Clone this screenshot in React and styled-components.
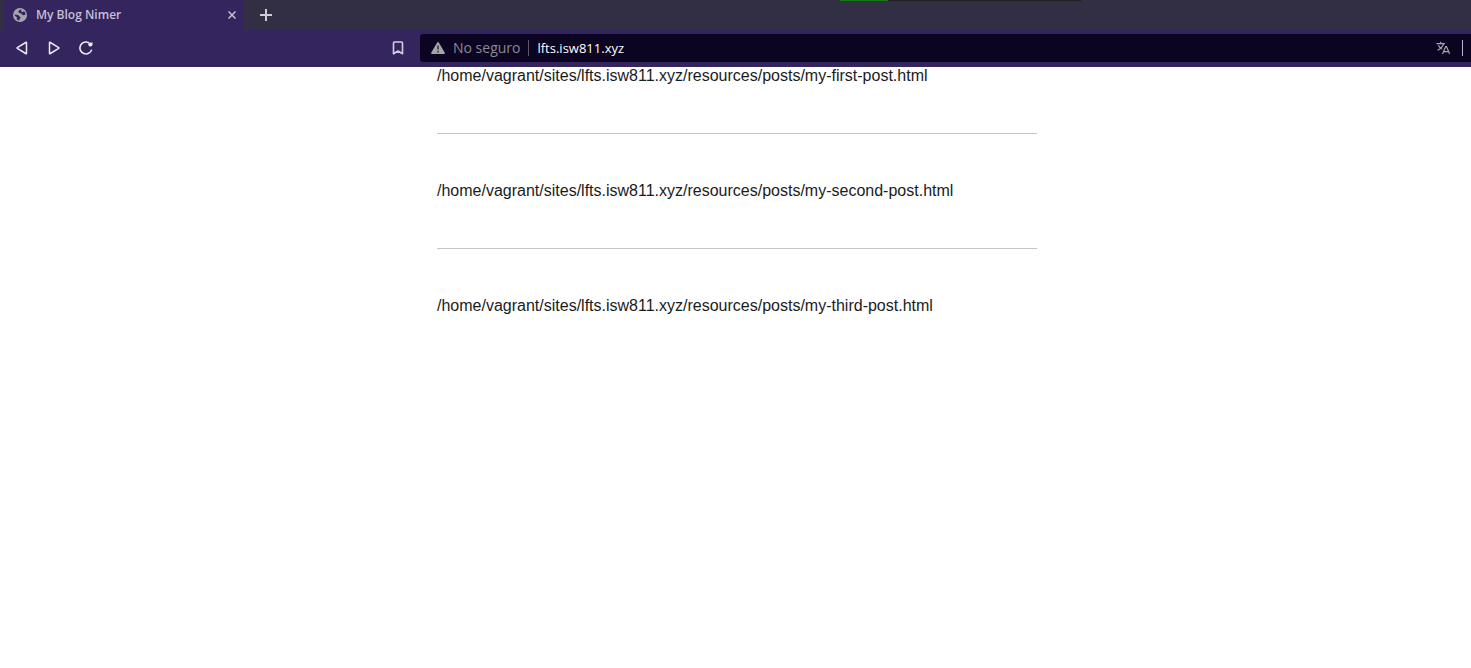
import React from "react";
import styled, { createGlobalStyle } from "styled-components";

const GlobalStyle = createGlobalStyle`
  * { box-sizing: border-box; }
  body {
    margin: 0;
    background: #ffffff;
    color: #1b1b1b;
    font-family: "Liberation Sans", Arial, sans-serif;
    font-size: 16px;
  }
  button, input { font-family: "Open Sans", "Noto Sans", sans-serif; }
`;

const Chrome = styled.header`
  position: relative;
  font-family: "Open Sans", "Noto Sans", sans-serif;
`;

const Progress = styled.div`
  position: absolute;
  top: 0;
  left: 840px;
  width: 241px;
  height: 1px;
  background: linear-gradient(to right, #107c10 20%, #1f1f1f 20%);
`;

const TabStrip = styled.div`
  display: flex;
  height: 30px;
  padding-left: 4px;
  background: #322e44;
`;

const Tab = styled.div`
  display: flex;
  align-items: center;
  width: 240px;
  padding: 0 4px 0 8px;
  background: #34255f;
  border-radius: 4px 0 0 0;
`;

const TabTitle = styled.span`
  flex: 1;
  margin-left: 8px;
  color: #c5bfd3;
  font-size: 12px;
  font-weight: 600;
  line-height: 16px;
  white-space: nowrap;
`;

const IconButton = styled.button`
  display: flex;
  align-items: center;
  justify-content: center;
  flex: none;
  width: ${({ $width }) => $width || 32}px;
  height: 28px;
  padding: 0;
  border: 0;
  background: none;
  color: ${({ $color }) => $color || "#ece9f3"};
`;

const NewTab = styled(IconButton)`
  align-self: center;
  margin-left: 6px;
`;

const Toolbar = styled.div`
  display: flex;
  align-items: center;
  height: 37px;
  padding: 4px 0 5px;
  background: #34255f;
`;

const Navigation = styled.nav`
  display: flex;
  flex: none;
  width: 420px;
  padding: 0 6px;
`;

const BookmarkButton = styled(IconButton)`
  margin-left: auto;
`;

const AddressBar = styled.div`
  display: flex;
  align-items: center;
  flex: 1;
  min-width: 0;
  height: 28px;
  padding: 0 8px 0 11px;
  background: #0b0521;
  border-radius: 3px 0 0 3px;
`;

const Security = styled.button`
  display: flex;
  align-items: center;
  flex: none;
  gap: 8px;
  padding: 0;
  border: 0;
  background: none;
  color: #8b8993;
  font-size: 14px;
  line-height: 20px;
`;

const Divider = styled.span`
  flex: none;
  width: 1px;
  height: 16px;
  margin: 0 ${({ $space }) => $space}px;
  background: ${({ $color }) => $color};
`;

const Url = styled.input`
  flex: 1;
  min-width: 0;
  padding: 0;
  border: 0;
  outline: 0;
  background: none;
  color: #ffffff;
  font-size: 13px;
  font-weight: 500;
  line-height: 20px;
`;

const Page = styled.main`
  padding-left: 3px;
`;

const Posts = styled.div`
  max-width: 600px;
  margin: 0 auto;
`;

const Post = styled.article`
  line-height: 18px;

  & + & {
    margin-top: 48px;
    padding-top: 48px;
    border-top: 1px solid #c5c5c5;
  }
`;

const GlobeIcon = () => (
  <svg width="16" height="16" viewBox="0 0 16 16" aria-hidden="true">
    <circle cx="8" cy="8" r="7" fill="#a5a4ac" />
    <path
      d="M9.4 2.6C7.6 3 6.2 3.6 6.4 5c.2 1.2 1.6 1.2 2.6 1.6 1 .4 1 1.5 2.2 1.7.9.1 1.6-.3 2.4-.7a5.6 5.6 0 0 0-1.6-3.5c-.6.8-1.2 1.2-2 1-.8-.2-.8-1.2-.6-2.5Z"
      fill="#34255f"
    />
    <path
      d="M2.4 7.6c1.4.4 2.8.1 3.9.6 1 .4.9 1.2 1.7 1.5.9.4.7 1.3.1 1.7-.7.5-.9 1.2-1 2.1a5.6 5.6 0 0 1-2.6-1.6c.8-.4.9-1 .3-1.6-.8-.7-1.9-1.2-2.4-2.7Z"
      fill="#34255f"
    />
  </svg>
);

const CloseIcon = () => (
  <svg width="8" height="8" viewBox="0 0 8 8" fill="none" stroke="currentColor" strokeWidth="1.5" aria-hidden="true">
    <path d="M.5.5l7 7M7.5.5l-7 7" />
  </svg>
);

const PlusIcon = () => (
  <svg width="12" height="12" viewBox="0 0 12 12" fill="none" stroke="currentColor" strokeWidth="2" aria-hidden="true">
    <path d="M6 0v12M0 6h12" />
  </svg>
);

const BackIcon = () => (
  <svg width="16" height="16" viewBox="0 0 16 16" fill="none" stroke="currentColor" strokeWidth="1.5" strokeLinejoin="round" aria-hidden="true">
    <path d="M12.5 2.8v10.4q0 .8-.8.3L3.3 8.4q-.5-.4 0-.8l8.4-5.1q.8-.5.8.3Z" />
  </svg>
);

const ForwardIcon = () => (
  <svg width="16" height="16" viewBox="0 0 16 16" fill="none" stroke="currentColor" strokeWidth="1.5" strokeLinejoin="round" aria-hidden="true">
    <path d="M3.5 2.8v10.4q0 .8.8.3l8.4-5.1q.5-.4 0-.8L4.3 2.5q-.8-.5-.8.3Z" />
  </svg>
);

const ReloadIcon = () => (
  <svg width="16" height="16" viewBox="0 0 16 16" aria-hidden="true">
    <path d="M11 2.8A6 6 0 1 0 13.7 9.6" fill="none" stroke="currentColor" strokeWidth="1.6" />
    <path d="M10.2 4.4q0-2 2-2h2.3v2.2q0 2-2 2t-2.3-2.2Z" fill="currentColor" />
  </svg>
);

const BookmarkIcon = () => (
  <svg width="16" height="16" viewBox="0 0 16 16" fill="none" stroke="currentColor" strokeWidth="1.6" strokeLinejoin="round" aria-hidden="true">
    <path d="M4.4 2h7.2q.9 0 .9.9v10.9L8 11l-4.5 2.8V2.9q0-.9.9-.9Z" />
  </svg>
);

const WarningIcon = () => (
  <svg width="14" height="14" viewBox="0 0 14 14" aria-hidden="true">
    <path d="M6.2 1.6q.8-1.2 1.6 0l5.9 10q.6 1.4-.9 1.4H1.2q-1.5 0-.9-1.4Z" fill="#a5a4ac" />
    <path d="M7 4.5v4M7 9.8v1.6" stroke="#393549" strokeWidth="1.6" />
  </svg>
);

const TranslateIcon = () => (
  <svg width="14" height="14" viewBox="0 0 14 14" fill="none" stroke="currentColor" strokeWidth="1.2" aria-hidden="true">
    <path d="M.5 2.6h8.4M4.7.8v1.8M1.5 9.2C4.8 7.6 6.8 5.6 7.5 2.8M2.3 4.2c1 2 2.2 3.2 4 4" />
    <path d="M6.5 13l3.2-7.5h.8l3.2 7.5M7.7 10.7h4.8" />
  </svg>
);

const posts = ["my-first-post", "my-second-post", "my-third-post"];

export default function App() {
  return (
    <>
      <GlobalStyle />
      <Chrome>
        <Progress />
        <TabStrip>
          <Tab>
            <GlobeIcon />
            <TabTitle>My Blog Nimer</TabTitle>
            <IconButton $width={16} $color="#c5bfd3" aria-label="Close tab"><CloseIcon /></IconButton>
          </Tab>
          <NewTab $color="#cfcdd5" aria-label="New tab"><PlusIcon /></NewTab>
        </TabStrip>
        <Toolbar>
          <Navigation>
            <IconButton aria-label="Back"><BackIcon /></IconButton>
            <IconButton aria-label="Forward"><ForwardIcon /></IconButton>
            <IconButton aria-label="Reload"><ReloadIcon /></IconButton>
            <BookmarkButton $color="#d2cedd" aria-label="Bookmark"><BookmarkIcon /></BookmarkButton>
          </Navigation>
          <AddressBar>
            <Security><WarningIcon />No seguro</Security>
            <Divider $space={8} $color="#5c586b" />
            <Url type="text" aria-label="Address" defaultValue="lfts.isw811.xyz" />
            <IconButton $width={38} $color="#aaa8b2" aria-label="Translate"><TranslateIcon /></IconButton>
            <Divider $space={0} $color="#bbb9c2" />
          </AddressBar>
        </Toolbar>
      </Chrome>
      <Page>
        <Posts>
          {posts.map((slug) => (
            <Post key={slug}>/home/vagrant/sites/lfts.isw811.xyz/resources/posts/{slug}.html</Post>
          ))}
        </Posts>
      </Page>
    </>
  );
}
